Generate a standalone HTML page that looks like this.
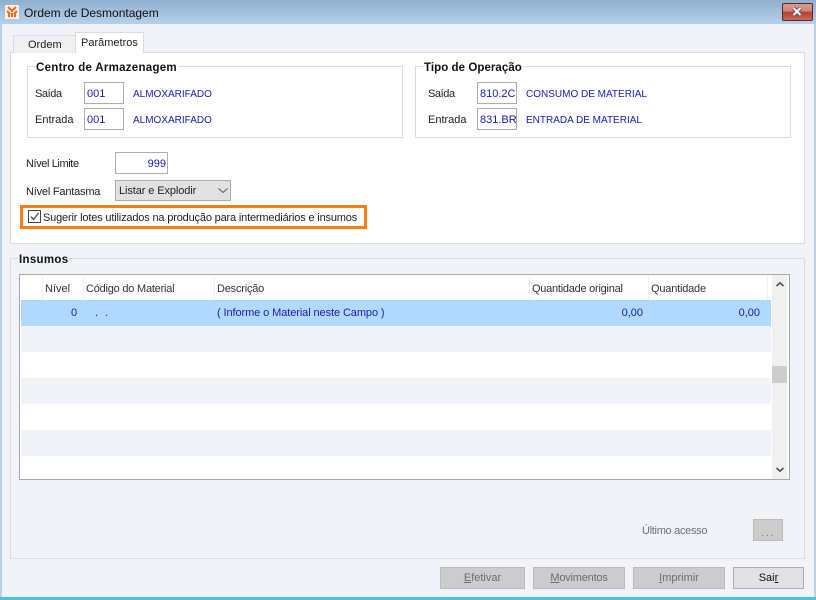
<!DOCTYPE html>
<html><head><meta charset="utf-8">
<style>
html,body{margin:0;padding:0;background:#f1f3f9}
#w{position:relative;width:816px;height:600px;overflow:hidden;background:#f1f3f9;font-family:"Liberation Sans",Arial,sans-serif;font-size:11px;color:#222}
#w div,#w span.t{position:absolute;box-sizing:border-box;white-space:nowrap}
.t{line-height:14px;height:14px}
.b{font-weight:bold;color:#111;font-size:11.5px;background:inherit;padding:0 1px}
.blue{color:#1a1ab4}
.cap{font-size:10px}
.inp{background:#fff;border:1px solid #adadad;color:#1a1ab4;line-height:23px;padding-left:2px}
.grp{border:1px solid #dcdcdc}
.btn{background:#cccccc;border:1px solid #bbbbbb;color:#6d6d6d;text-align:center;line-height:21px;height:22px;top:567px}
.row{left:21px;width:750px}
.sep{top:276px;width:1px;height:24px;background:#f0f0f0}
.h{top:282px;color:#333}
u{text-decoration:underline}
</style></head><body>
<div id="w">
<div style="left:0;top:0;width:816px;height:24px;background:linear-gradient(#90afcd,#b6d0ea)"></div>
<div style="left:0;top:24px;width:2px;height:574px;background:#b6d0ea"></div>
<div style="left:814px;top:24px;width:2px;height:574px;background:#b6d0ea"></div>
<div style="left:0;top:597px;width:816px;height:3px;background:#45c4dc"></div>
<svg style="position:absolute;left:5px;top:5px" width="14" height="14" viewBox="0 0 14 14"><rect width="14" height="14" fill="#fbeee6"/><path d="M3 2L6 5M11 2L8 5M2 6L5 9M12 6L9 9M7 4V7M4 8V12M7 8V12M10 8V12" fill="none" stroke="#ee6a1c" stroke-width="2"/></svg>
<span class="t" style="left:24px;top:6px;font-size:12px;color:#111">Ordem de Desmontagem</span>
<div style="left:782px;top:3px;width:31px;height:18px;border:1px solid #5a2634;border-radius:2px;background:linear-gradient(#dd9a8e 0,#d18377 45%,#b4412f 50%,#c9695a 100%)"></div>
<svg style="position:absolute;left:790px;top:6px" width="14" height="11" viewBox="0 0 14 11"><path d="M3.500 2L10.500 9M10.500 2L3.500 9" stroke="#4a4a5a" stroke-width="3.800"/><path d="M3.500 2L10.500 9M10.500 2L3.500 9" stroke="#f2f2f4" stroke-width="2.200"/></svg>

<div style="left:10px;top:52px;width:795px;height:192px;background:#fff;border:1px solid #dcdcdc"></div>
<div style="left:13px;top:35px;width:63px;height:18px;background:#f0f0f0;border:1px solid #dcdcdc;border-bottom:0"></div>
<span class="t" style="left:28px;top:38px;color:#222">Ordem</span>
<div style="left:75px;top:32px;width:69px;height:21px;background:#fff;border:1px solid #dcdcdc;border-bottom:0"></div>
<span class="t" style="left:81px;top:36px">Parâmetros</span>

<div class="grp" style="left:27px;top:66px;width:376px;height:72px;background:#fff"></div>
<span class="t b" style="left:35px;top:61px;background:#fff;letter-spacing:.28px">Centro de Armazenagem</span>
<span class="t" style="left:35px;top:87px;letter-spacing:-.4px">Saída</span>
<span class="t" style="left:35px;top:113px">Entrada</span>
<div class="inp" style="left:84px;top:82px;width:40px;height:22px">001</div>
<div class="inp" style="left:84px;top:108px;width:40px;height:22px">001</div>
<span class="t blue cap" style="left:133px;top:88px">ALMOXARIFADO</span>
<span class="t blue cap" style="left:133px;top:114px">ALMOXARIFADO</span>

<div class="grp" style="left:415px;top:66px;width:376px;height:72px;background:#fff"></div>
<span class="t b" style="left:423px;top:61px;background:#fff;letter-spacing:.06px">Tipo de Operação</span>
<span class="t" style="left:428px;top:87px;letter-spacing:-.4px">Saída</span>
<span class="t" style="left:428px;top:113px">Entrada</span>
<div class="inp" style="left:477px;top:82px;width:40px;height:22px">810.2C</div>
<div class="inp" style="left:477px;top:108px;width:40px;height:22px">831.BR</div>
<span class="t blue cap" style="left:526px;top:88px">CONSUMO DE MATERIAL</span>
<span class="t blue cap" style="left:526px;top:114px">ENTRADA DE MATERIAL</span>

<span class="t" style="left:26px;top:157px;letter-spacing:-.4px">Nível Limite</span>
<div class="inp" style="left:115px;top:152px;width:53px;height:22px;text-align:right;padding:0 1px 0 0">999</div>
<span class="t" style="left:26px;top:185px;letter-spacing:-.2px">Nível Fantasma</span>
<div style="left:115px;top:180px;width:116px;height:21px;background:#e1e1e1;border:1px solid #adadad;line-height:20px;padding-left:3px;color:#222;letter-spacing:-.1px">Listar e Explodir</div>
<svg style="position:absolute;left:217px;top:187px" width="12" height="8" viewBox="0 0 12 8"><path d="M1.500 1.500L6 5.500L10.500 1.500" fill="none" stroke="#555" stroke-width="1"/></svg>

<div style="left:20px;top:205px;width:347px;height:24px;border:3px solid #f77c12"></div>
<div style="left:28px;top:210px;width:13px;height:13px;background:#fff;border:1px solid #444"></div>
<svg style="position:absolute;left:28px;top:210px" width="13" height="13" viewBox="0 0 13 13"><path d="M3 6.500L5.500 9.500L10.500 3" fill="none" stroke="#555" stroke-width="1.400"/></svg>
<span class="t" style="left:43px;top:211px;font-size:11px;letter-spacing:-.17px;color:#222">Sugerir lotes utilizados na produção para intermediários e insumos</span>

<div class="grp" style="left:10px;top:258px;width:795px;height:301px"></div>
<span class="t b" style="left:18px;top:253px;background:#f1f3f9;letter-spacing:.3px">Insumos</span>

<div style="left:19px;top:274px;width:771px;height:206px;background:#fff;border:1px solid #a9a9a9"></div>
<div class="row" style="top:300px;height:26px;background:#b1d8fd"></div>
<div class="row" style="top:326px;height:26px;background:#f1f3f9"></div>
<div class="row" style="top:378px;height:26px;background:#f1f3f9"></div>
<div class="row" style="top:430px;height:26px;background:#f1f3f9"></div>
<div class="sep" style="left:42px"></div><div class="sep" style="left:83px"></div><div class="sep" style="left:214px"></div><div class="sep" style="left:529px"></div><div class="sep" style="left:648px"></div><div class="sep" style="left:767px"></div>
<span class="t h" style="left:45px">Nível</span>
<span class="t h" style="left:86px;letter-spacing:-.22px">Código do Material</span>
<span class="t h" style="left:217px;letter-spacing:-.2px">Descrição</span>
<span class="t h" style="left:532px;letter-spacing:-.25px">Quantidade original</span>
<span class="t h" style="left:651px;letter-spacing:-.2px">Quantidade</span>
<span class="t blue" style="left:71px;top:306px">0</span>
<span class="t blue" style="left:95px;top:306px;word-spacing:4px">. .</span>
<span class="t blue" style="left:217px;top:306px;letter-spacing:-.09px">( Informe o Material neste Campo )</span>
<span class="t blue" style="left:592px;top:306px;width:51px;text-align:right">0,00</span>
<span class="t blue" style="left:710px;top:306px;width:50px;text-align:right">0,00</span>
<div style="left:772px;top:275px;width:15px;height:204px;background:#f0f0f0"></div>
<div style="left:772px;top:366px;width:15px;height:17px;background:#cdcdcd"></div>
<svg style="position:absolute;left:775px;top:281px" width="10" height="7" viewBox="0 0 10 7"><path d="M1.500 5L5 1.800L8.500 5" fill="none" stroke="#505050" stroke-width="1.600"/></svg>
<svg style="position:absolute;left:775px;top:466px" width="10" height="7" viewBox="0 0 10 7"><path d="M1.500 2L5 5.200L8.500 2" fill="none" stroke="#505050" stroke-width="1.600"/></svg>

<span class="t" style="left:642px;top:524px;color:#6d6d80;letter-spacing:-.3px">Último acesso</span>
<div style="left:753px;top:519px;width:30px;height:22px;background:#cccccc;border:1px solid #bbb;color:#777;text-align:center;line-height:26px;letter-spacing:1.5px">...</div>

<div class="btn" style="left:440px;width:85px"><u>E</u>fetivar</div>
<div class="btn" style="left:533px;width:92px;letter-spacing:-.2px"><u>M</u>ovimentos</div>
<div class="btn" style="left:633px;width:92px"><u>I</u>mprimir</div>
<div class="btn" style="left:733px;width:71px;background:#e1e1e1;border-color:#adadad;color:#111">Sai<u>r</u></div>
</div>
</body></html>
